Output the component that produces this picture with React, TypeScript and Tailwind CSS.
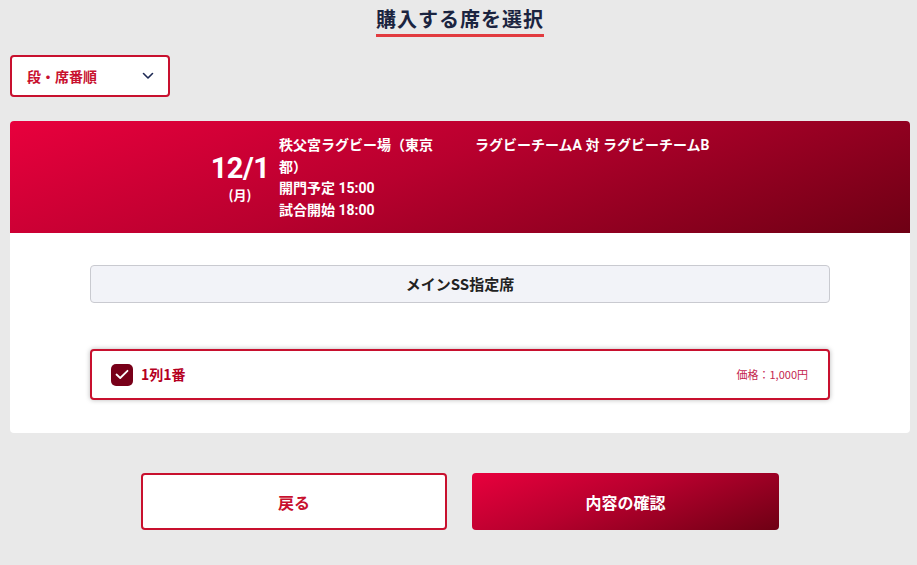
import React from "react";

const jp = { fontFamily: '"Noto Sans CJK JP", "Noto Sans", sans-serif' };
const rb = { fontFamily: 'Roboto, "Noto Sans CJK JP", sans-serif' };

export default function App() {
  return (
    <div className="w-[917px] h-[565px] bg-[#e9e9e9] overflow-hidden" style={jp}>
      <div className="w-[900px] ml-[10px] flex flex-col">
        <div className="flex justify-center pt-[5px]">
          <h1 className="text-[20px] leading-[28px] font-bold tracking-[1px] text-[#1b2440] border-b-[3px] border-[#e23b3f] pb-[1px]">
            購入する席を選択
          </h1>
        </div>

        <div className="mt-[18px]">
          <button className="w-[160px] h-[42px] bg-white border-2 border-[#c8102e] rounded-[4px] flex items-center justify-between pl-[15px] pr-[14px]">
            <span className="text-[14px] font-bold text-[#c8102e]">段・席番順</span>
            <svg width="12" height="8" viewBox="0 0 12 8" fill="none">
              <path d="M1.5 1.5 L6 6 L10.5 1.5" stroke="#1e2a55" strokeWidth="1.6" strokeLinecap="round" strokeLinejoin="round" />
            </svg>
          </button>
        </div>

        <div className="mt-[24px] rounded-[4px] overflow-hidden bg-white">
          <div className="h-[112px] bg-[linear-gradient(160deg,#e8003d_0%,#b8002e_45%,#6e0014_100%)] flex items-center pl-[191px] text-white" style={rb}>
            <div className="w-[78px] flex flex-col items-center pt-[2px]">
              <div className="text-[29px] leading-[30px] font-bold tracking-[-0.5px]">12/1</div>
              <div className="mt-[4px] text-[13px] leading-[16px] font-bold" style={jp}>(月)</div>
            </div>
            <div className="w-[160px] text-[14px] leading-[22px] font-bold">
              <div style={jp}>秩父宮ラグビー場（東京都）</div>
              <div>開門予定 15:00</div>
              <div>試合開始 18:00</div>
            </div>
            <div className="ml-[36px] self-start mt-[13px] text-[14px] leading-[22px] font-bold">
              ラグビーチームA 対 ラグビーチームB
            </div>
          </div>

          <div className="px-[80px] pt-[32px] pb-[33px] flex flex-col">
            <div className="h-[38px] bg-[#f2f3f8] border border-[#c9cad0] rounded-[4px] flex items-center justify-center">
              <span className="text-[15px] font-bold text-[#222]">メインSS指定席</span>
            </div>
            <div className="mt-[46px] h-[51px] border-2 border-[#c8102e] rounded-[4px] bg-white shadow-[0_0_5px_rgba(0,0,0,0.28)] flex items-center pl-[19px] pr-[20px]">
              <div className="w-[22px] h-[22px] rounded-[5px] bg-[#780019] flex items-center justify-center">
                <svg width="14" height="11" viewBox="0 0 14 11" fill="none">
                  <path d="M1.5 5.5 L5.2 9 L12.5 1.8" stroke="white" strokeWidth="1.8" strokeLinecap="round" strokeLinejoin="round" />
                </svg>
              </div>
              <span className="ml-[8px] text-[14px] font-bold text-[#b5001f]">1列1番</span>
              <span className="ml-auto text-[11px] text-[#c4264f]">価格：1,000円</span>
            </div>
          </div>
        </div>

        <div className="mt-[40px] flex justify-center gap-[25px]">
          <button className="w-[306px] h-[57px] bg-white border-2 border-[#c8102e] rounded-[4px] flex items-center justify-center text-[16px] font-bold text-[#c8102e]">
            戻る
          </button>
          <button className="w-[307px] h-[57px] rounded-[4px] bg-[linear-gradient(160deg,#e8003d_0%,#b8002e_45%,#6e0014_100%)] flex items-center justify-center text-[16px] font-bold text-white">
            内容の確認
          </button>
        </div>
      </div>
    </div>
  );
}
